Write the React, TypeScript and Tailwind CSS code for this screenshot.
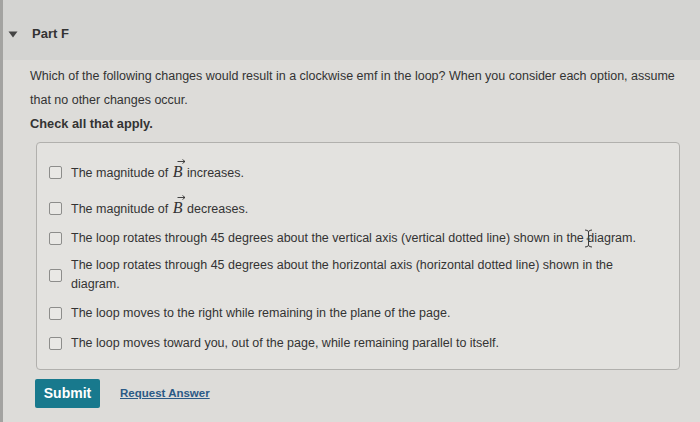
import React from "react";

function VecB() {
  return (
    <span className="relative inline-block mx-[1px]" style={{ fontFamily: '"Liberation Serif", serif' }}>
      <span className="italic text-[16px] leading-[17px]">B</span>
      <svg className="absolute left-[4px] top-[-4px]" width="9" height="5" viewBox="0 0 9 5">
        <path d="M0.5 2.5 H8 M5.5 0.5 L8 2.5 L5.5 4.5" stroke="#333" strokeWidth="0.9" fill="none" />
      </svg>
    </span>
  );
}

function Box() {
  return <span className="shrink-0 w-[13px] h-[13px] rounded-[2px] border border-[#8d8d8b] bg-[#e9e8e5]" />;
}

function Option({ children, className }: { children: React.ReactNode; className: string }) {
  return (
    <div className={`flex items-center gap-[9px] ${className}`}>
      <Box />
      <div className="leading-[17px]">{children}</div>
    </div>
  );
}

export default function App() {
  return (
    <div
      className="relative w-[700px] h-[422px] bg-[#dddcd9] text-[#2e2e2e] border-l-[3px] border-[#a3a3a1] overflow-hidden"
      style={{ fontFamily: '"Liberation Sans", Arial, sans-serif' }}
    >
      <div className="h-[60px] bg-[#d4d4d2] flex items-center pl-[5px] pt-[8px]">
        <svg width="10" height="7" viewBox="0 0 10 7" className="mr-[14px]">
          <path d="M0.5 0.5 H9.5 L5 6.5 Z" fill="#444" />
        </svg>
        <span className="text-[13px] font-bold text-[#333]">Part F</span>
      </div>
      <div className="pl-[27px] pr-[8px] pt-[4px]">
        <p className="text-[12.5px] leading-[24px] text-[#333]">
          Which of the following changes would result in a clockwise emf in the loop? When you consider each option, assume
          that no other changes occur.
        </p>
        <p className="text-[12.8px] font-bold mt-[2px] text-[#333]">Check all that apply.</p>
        <div className="mt-[9px] ml-[6px] w-[644px] h-[228px] rounded-[4px] border border-[#b1b0ad] bg-[#e3e2df] pl-[12px] pr-[30px] pt-[18px] text-[12.5px] text-[#333] flex flex-col">
          <Option className="h-[22px]">
            The magnitude of <VecB /> increases.
          </Option>
          <Option className="h-[22px] mt-[14px]">
            The magnitude of <VecB /> decreases.
          </Option>
          <Option className="mt-[11px]">
            The loop rotates through 45 degrees about the vertical axis (vertical dotted line) shown in the diagram.
          </Option>
          <div className="flex items-start gap-[9px] mt-[9px]">
            <span className="flex mt-[13px]">
              <Box />
            </span>
            <div className="leading-[19px]">
              The loop rotates through 45 degrees about the horizontal axis (horizontal dotted line) shown in the diagram.
            </div>
          </div>
          <Option className="mt-[11px]">The loop moves to the right while remaining in the plane of the page.</Option>
          <Option className="mt-[13px]">The loop moves toward you, out of the page, while remaining parallel to itself.</Option>
        </div>
        <div className="flex items-center mt-[9px] ml-[5px] gap-[20px]">
          <button className="w-[65px] h-[29px] rounded-[2px] bg-[#18798d] text-white text-[14px] font-bold">Submit</button>
          <a className="text-[11.5px] font-bold text-[#2b5a86] underline">Request Answer</a>
        </div>
      </div>
      <svg className="absolute left-[581px] top-[229px]" width="9" height="19" viewBox="0 0 9 19">
        <path d="M1 1 Q4.5 1 4.5 3 V16 Q4.5 18 1 18 M8 1 Q4.5 1 4.5 3 M8 18 Q4.5 18 4.5 16 M2.5 10 H6.5" stroke="#3a3a3a" strokeWidth="1" fill="none" />
      </svg>
    </div>
  );
}
